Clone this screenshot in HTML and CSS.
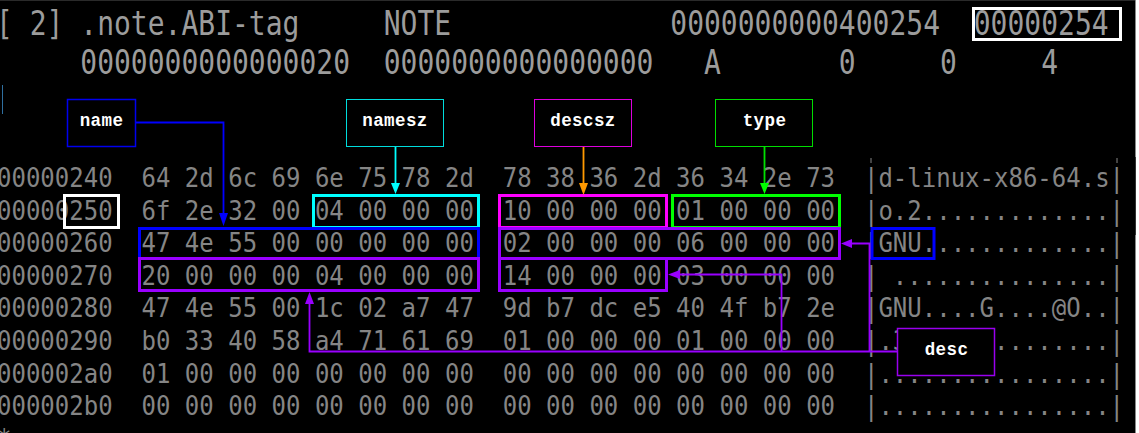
FILE: index.html
```html
<!DOCTYPE html>
<html lang="en">
<head>
<meta charset="utf-8">
<title>.note.ABI-tag hexdump</title>
<link rel="stylesheet" href="styles.css">
</head>
<body>
<main class="terminal">
<pre class="sections">[ 2] .note.ABI-tag     NOTE             0000000000400254  00000254
     0000000000000020  0000000000000000   A       0     0     4</pre>
<pre class="hexdump">00000240  64 2d 6c 69 6e 75 78 2d  78 38 36 2d 36 34 2e 73  |d-linux-x86-64.s|
00000250  6f 2e 32 00 04 00 00 00  10 00 00 00 01 00 00 00  |o.2.............|
00000260  47 4e 55 00 00 00 00 00  02 00 00 00 06 00 00 00  |GNU.............|
00000270  20 00 00 00 04 00 00 00  14 00 00 00 03 00 00 00  | ...............|
00000280  47 4e 55 00 1c 02 a7 47  9d b7 dc e5 40 4f b7 2e  |GNU....G....@O..|
00000290  b0 33 40 58 a4 71 61 69  01 00 00 00 01 00 00 00  |.3@X.qai........|
000002a0  01 00 00 00 00 00 00 00  00 00 00 00 00 00 00 00  |................|
000002b0  00 00 00 00 00 00 00 00  00 00 00 00 00 00 00 00  |................|
*</pre>
</main>
<svg class="notes" width="1139" height="433" viewBox="0 0 1139 433" aria-label="ELF note annotations">
  <rect class="cursor" x="2" y="85" width="1" height="29"/>
  <path class="tick" d="M871 158V163M1117 158V163"/>

  <rect class="hl white" x="973.5" y="8.5" width="147" height="31"/>
  <rect class="hl white" x="64.5" y="195.5" width="54" height="32"/>
  <rect class="hl cyan" x="313.5" y="195.5" width="165" height="32"/>
  <rect class="hl magenta" x="499.5" y="195.5" width="167" height="32"/>
  <rect class="hl green" x="672.5" y="195.5" width="167" height="32"/>
  <rect class="hl blue" x="139.5" y="228.5" width="339" height="30"/>
  <rect class="hl purple" x="139.5" y="258.5" width="339" height="32"/>
  <rect class="hl purple" x="499.5" y="228.5" width="340" height="30"/>
  <rect class="hl purple" x="499.5" y="258.5" width="167" height="32"/>
  <rect class="hl blue" x="872" y="228.5" width="62" height="30"/>

  <path class="line blue-line" d="M136 122.5H223.5V214"/>
  <polygon class="blue-fill" points="219,213 228,213 223.5,226"/>
  <path class="line cyan-line" d="M395.5 147V184"/>
  <polygon class="cyan-fill" points="391,183 400,183 395.5,194"/>
  <path class="line orange-line" d="M583.5 147V184"/>
  <polygon class="orange-fill" points="579,183 588,183 583.5,195"/>
  <path class="line green-line" d="M764.5 146V184"/>
  <polygon class="green-fill" points="760,183 769,183 764.5,194"/>

  <path class="line purple-line" d="M898 351.5H309.5V303"/>
  <polygon class="purple-fill" points="305,304 314,304 309.5,292"/>
  <path class="line purple-line" d="M781.5 351.5V274.5H678"/>
  <polygon class="purple-fill" points="680,270 680,279 668,274.5"/>
  <path class="line purple-line" d="M869.5 351.5V243.5H850"/>
  <polygon class="purple-fill" points="852,239 852,248 841,243.5"/>

  <rect class="box blue-box" x="67.5" y="99.5" width="68" height="47"/>
  <rect class="box cyan-box" x="346.5" y="99.5" width="97" height="47"/>
  <rect class="box magenta-box" x="534.5" y="99.5" width="97" height="47"/>
  <rect class="box green-box" x="715.5" y="99.5" width="97" height="47"/>
  <rect class="box purple-box" x="897.5" y="328.5" width="97" height="47"/>

  <text class="label" x="101.5" y="126">name</text>
  <text class="label" x="395" y="126">namesz</text>
  <text class="label" x="583" y="126">descsz</text>
  <text class="label" x="764.5" y="126">type</text>
  <text class="label" x="946.5" y="355">desc</text>

  <rect class="edge-light" x="1135" y="0" width="1" height="157"/>
  <rect class="edge-dark" x="1135" y="157" width="1" height="78"/>
  <rect class="edge-light" x="1135" y="235" width="1" height="198"/>
  <rect class="edge-white" x="1136" y="0" width="3" height="433"/>
</svg>
</body>
</html>
```
FILE: styles.css
```css
html, body {
  margin: 0;
  padding: 0;
  background: #000;
  width: 1139px;
  height: 433px;
  overflow: hidden;
}

.terminal {
  display: flex;
  flex-direction: column;
  border-top: 1px solid #2a2a2a;
  height: 432px;
  overflow: hidden;
}

pre {
  margin: 0;
  font-family: "DejaVu Sans Mono", monospace;
  white-space: pre;
}

.sections {
  font-size: 28px;
  line-height: 32px;
  color: #9c9c9c;
  margin-top: 3px;
  margin-left: -4px;
  transform: scaleY(1.22);
  transform-origin: 0 0;
  height: 64px;
  flex: none;
}

.hexdump {
  font-size: 24px;
  line-height: 28.6px;
  color: #858585;
  margin-top: 94px;
  margin-left: -3px;
  transform: scaleY(1.14);
  transform-origin: 0 0;
  flex: none;
}

.notes {
  position: absolute;
  left: 0;
  top: 0;
}

.cursor { fill: #2f6f9f; }
.tick { fill: none; stroke: #858585; stroke-width: 1; }
.edge-light { fill: #888; }
.edge-dark { fill: #333; }
.edge-white { fill: #fff; }

.hl { fill: none; stroke-width: 3; }
.white { stroke: #fff; }
.cyan { stroke: #00ffff; }
.magenta { stroke: #ff00ff; }
.green { stroke: #00ff00; }
.blue { stroke: #0000ff; }
.purple { stroke: #9900ff; }

.line { fill: none; stroke-width: 1.8; }
.blue-line { stroke: #0000ff; }
.cyan-line { stroke: #00ffff; }
.orange-line { stroke: #ff9900; }
.green-line { stroke: #00e000; }
.purple-line { stroke: #9900ff; }

.blue-fill { fill: #0000ff; }
.cyan-fill { fill: #00ffff; }
.orange-fill { fill: #ff9900; }
.green-fill { fill: #00ff00; }
.purple-fill { fill: #9900ff; }

.box { fill: #000; }
.blue-box { stroke: #0000ee; stroke-width: 1.5; }
.cyan-box { stroke: #00dddd; stroke-width: 1; }
.magenta-box { stroke: #dd00dd; stroke-width: 1; }
.green-box { stroke: #00dd00; stroke-width: 1; }
.purple-box { stroke: #9900ee; stroke-width: 1.5; }

.label {
  font-family: "Liberation Mono", monospace;
  font-size: 17.5px;
  letter-spacing: 0.4px;
  font-weight: 700;
  fill: #fff;
  text-anchor: middle;
}
```
